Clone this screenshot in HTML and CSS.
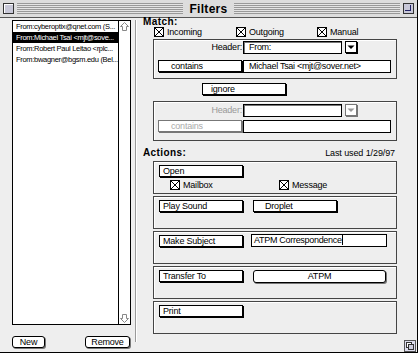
FILE: index.html
```html
<!DOCTYPE html>
<html lang="en">
<head>
  <meta charset="UTF-8">
  <title>Filters</title>
  <link rel="stylesheet" href="styles.css">
</head>
<body>
  <div class="window">
    <div class="titlebar">
      <span class="closebox"></span>
      <span class="stripes"></span>
      <span class="title">Filters</span>
      <span class="stripes"></span>
      <span class="zoombox"><span></span></span>
    </div>

    <div class="content">
      <div class="left">
        <div class="list">
          <ul class="rows">
            <li>From:cyberoptix@qnet.com (S...</li>
            <li class="sel">From:Michael Tsai &lt;mjt@sove...</li>
            <li>From:Robert Paul Leitao &lt;rplc...</li>
            <li>From:bwagner@bgsm.edu (Bel...</li>
          </ul>
          <div class="scroll">
            <span class="arrow up">
              <svg width="11" height="11" viewBox="0 0 11 11"><path d="M5.5 1.5L9.5 5.5H7.5V9.5H3.5V5.5H1.5Z" fill="#fff" stroke="#888"/></svg>
            </span>
            <span class="track"></span>
            <span class="arrow down">
              <svg width="11" height="11" viewBox="0 0 11 11"><path d="M5.5 9.5L9.5 5.5H7.5V1.5H3.5V5.5H1.5Z" fill="#fff" stroke="#888"/></svg>
            </span>
          </div>
        </div>
        <div class="listbtns">
          <button class="rbtn new">New</button>
          <button class="rbtn remove">Remove</button>
        </div>
      </div>

      <div class="sep"></div>

      <div class="right">
        <div class="heading">Match:</div>
        <div class="checks">
          <span class="check w82"><svg width="10" height="10" viewBox="0 0 10 10"><rect x="0.5" y="0.5" width="9" height="9" fill="#fff" stroke="#000"/><path d="M1 1L9 9M9 1L1 9" stroke="#000"/></svg>Incoming</span>
          <span class="check w81"><svg width="10" height="10" viewBox="0 0 10 10"><rect x="0.5" y="0.5" width="9" height="9" fill="#fff" stroke="#000"/><path d="M1 1L9 9M9 1L1 9" stroke="#000"/></svg>Outgoing</span>
          <span class="check"><svg width="10" height="10" viewBox="0 0 10 10"><rect x="0.5" y="0.5" width="9" height="9" fill="#fff" stroke="#000"/><path d="M1 1L9 9M9 1L1 9" stroke="#000"/></svg>Manual</span>
        </div>

        <div class="group g1">
          <div class="row">
            <span class="hdr">Header:</span>
            <span class="field from">From:</span>
            <span class="popup"><svg width="10" height="10" viewBox="0 0 10 10"><path d="M1.5 3.5H8.5L5 7Z" fill="#000"/></svg></span>
          </div>
          <div class="row r2">
            <span class="pbtn contains">contains</span>
            <span class="field wide">Michael Tsai &lt;mjt@sover.net&gt;</span>
          </div>
        </div>

        <div class="ignore-row"><span class="pbtn ignore">ignore</span></div>

        <div class="group g2 dim">
          <div class="row">
            <span class="hdr">Header:</span>
            <span class="field from"></span>
            <span class="popup"><svg width="10" height="10" viewBox="0 0 10 10"><path d="M1.5 3.5H8.5L5 7Z" fill="#999"/></svg></span>
          </div>
          <div class="row r2">
            <span class="pbtn contains">contains</span>
            <span class="field wide"></span>
          </div>
        </div>

        <div class="heading actions-head">
          <span>Actions:</span>
          <span class="lastused">Last used 1/29/97</span>
        </div>

        <div class="action">
          <span class="pbtn act">Open</span>
          <div class="subchecks">
            <span class="check w109"><svg width="10" height="10" viewBox="0 0 10 10"><rect x="0.5" y="0.5" width="9" height="9" fill="#fff" stroke="#000"/><path d="M1 1L9 9M9 1L1 9" stroke="#000"/></svg>Mailbox</span>
            <span class="check"><svg width="10" height="10" viewBox="0 0 10 10"><rect x="0.5" y="0.5" width="9" height="9" fill="#fff" stroke="#000"/><path d="M1 1L9 9M9 1L1 9" stroke="#000"/></svg>Message</span>
          </div>
        </div>

        <div class="action">
          <div class="arow">
            <span class="pbtn act">Play Sound</span>
            <span class="pbtn droplet">Droplet</span>
          </div>
        </div>

        <div class="action">
          <div class="arow">
            <span class="pbtn act">Make Subject</span>
            <span class="field subject">ATPM Correspondence<i class="caret"></i></span>
          </div>
        </div>

        <div class="action">
          <div class="arow">
            <span class="pbtn act">Transfer To</span>
            <span class="rbtn mailbox">ATPM</span>
          </div>
        </div>

        <div class="action">
          <span class="pbtn act">Print</span>
        </div>
      </div>
    </div>

    <span class="growbox">
      <svg width="12" height="12" viewBox="0 0 12 12"><rect x="0.5" y="0.5" width="11" height="11" fill="#dde" stroke="#555"/><rect x="2.5" y="2.5" width="5" height="5" fill="#fff" stroke="#333"/><rect x="4.5" y="4.5" width="5" height="5" fill="#ccd" stroke="#333"/></svg>
    </span>
  </div>
</body>
</html>
```

FILE: styles.css
```css
body { margin: 0; background: #fff; font-family: "Liberation Sans", Arial, sans-serif; font-size: 9px; color: #000; }
.window { position: relative; width: 417px; height: 352px; background: #eee; border-right: 1px solid #000; border-bottom: 1px solid #000; }

/* title bar */
.titlebar { display: flex; align-items: center; height: 17px; background: #ddd; border-bottom: 1px solid #555; }
.closebox { width: 9px; height: 9px; margin-left: 3px; border: 1px solid #333; background: #c8c8d8; box-shadow: inset 1px 1px 0 #fff; }
.stripes { flex: 1; height: 11px; margin: 0 3px; background: repeating-linear-gradient(#999 0 1px, #e4e4e4 1px 2px); }
.title { font-size: 12px; font-weight: bold; letter-spacing: 0.3px; padding: 0 3px; }
.zoombox { width: 9px; height: 9px; margin-right: 3px; border: 1px solid #333; background: #c8c8d8; position: relative; }
.zoombox span { position: absolute; left: 1px; top: 1px; width: 5px; height: 5px; border-right: 1px solid #226; border-bottom: 1px solid #226; }

.content { display: flex; height: 334px; }

/* left list */
.left { width: 119px; padding: 2px 0 0 12px; }
.list { display: flex; height: 303px; border: 1px solid #000; background: #fff; }
.rows { flex: 1; min-width: 0; margin: 0; padding: 0; list-style: none; }
.rows li { height: 11px; line-height: 11px; padding-left: 3px; font-size: 7.5px; letter-spacing: -0.3px; white-space: nowrap; }
.rows li.sel { background: #000; color: #fff; }
.scroll { display: flex; flex-direction: column; width: 11px; border-left: 1px solid #000; }
.arrow { height: 11px; display: block; }
.arrow svg { display: block; }
.track { flex: 1; }
.listbtns { display: flex; justify-content: space-between; margin-top: 11px; padding-right: 1px; }
.rbtn { height: 12px; padding: 0; border: 1px solid #000; border-radius: 3px; background: #fff; box-shadow: 1px 1px 0 #777; font: 9px "Liberation Sans", Arial, sans-serif; letter-spacing: -0.2px; line-height: 10px; text-align: center; }
.rbtn.new { width: 33px; }
.rbtn.remove { width: 45px; }

.sep { width: 0; height: 322px; margin: 2px 0 0 4px; border-left: 1px solid #999; border-right: 1px solid #fff; }

/* right side */
.right { width: 254px; padding-left: 6px; }
.heading { height: 10px; line-height: 10px; margin-top: -1px; font-size: 10px; font-weight: bold; letter-spacing: 0.4px; }
.checks { display: flex; height: 10px; margin-left: 11px; }
.check { display: flex; align-items: center; height: 10px; line-height: 10px; letter-spacing: -0.2px; }
.check svg { margin-right: 3px; flex: none; }
.w82 { width: 82px; }
.w81 { width: 81px; }
.w109 { width: 109px; }

.group { box-sizing: border-box; width: 244px; height: 40px; margin-left: 10px; border: 1px solid #444; box-shadow: inset 1px 1px 0 #fff; padding: 1px 0 0 4px; }
.g1 { margin-top: 2px; }
.g2 { margin-top: 6px; padding-top: 2px; }
.row { display: flex; align-items: flex-start; }
.g1 .r2 { margin-top: 6px; }
.g2 .r2 { margin-top: 3px; }
.hdr { width: 84px; padding-right: 1px; height: 13px; line-height: 13px; text-align: right; letter-spacing: -0.2px; }
.dim .hdr { color: #999; }

.field { box-sizing: border-box; display: block; height: 13px; line-height: 11px; border: 1px solid #000; background: #fff; padding-left: 5px; letter-spacing: -0.3px; white-space: nowrap; }
.field.from { width: 99px; box-shadow: inset 1px 1px 0 #777; }
.field.wide { width: 148px; margin-left: 1px; }
.popup { box-sizing: border-box; width: 12px; height: 12px; margin-left: 3px; border: 1px solid #000; background: #fff; box-shadow: 1px 1px 0 #000; }
.popup svg { display: block; margin: 0 auto; }
.dim .popup { border-color: #777; box-shadow: 1px 1px 0 #777; }

.pbtn { box-sizing: border-box; display: block; width: 84px; height: 12px; line-height: 10px; border: 1px solid #000; background: #fff; box-shadow: 1px 1px 0 #000; padding-left: 3px; letter-spacing: -0.2px; white-space: nowrap; }
.pbtn.contains { padding-left: 12px; }
.dim .pbtn { color: #aaa; border-color: #777; box-shadow: 1px 1px 0 #777; }
.ignore-row { margin: 4px 0 0 59px; }
.pbtn.ignore { padding-left: 8px; }

.actions-head { display: flex; justify-content: space-between; margin-top: 7px; padding-right: 2px; }
.lastused { font-weight: normal; font-size: 9px; letter-spacing: -0.1px; }

.action { box-sizing: border-box; width: 244px; height: 33px; margin: 2px 0 0 10px; border: 1px solid #444; box-shadow: inset 1px 1px 0 #fff; padding: 3px 0 0 5px; }
.actions-head + .action { margin-top: 3px; }
.arow { display: flex; align-items: flex-start; }
.subchecks { display: flex; margin: 3px 0 0 11px; }
.pbtn.droplet { margin-left: 10px; padding-left: 11px; }
.field.subject { width: 136px; margin: -1px 0 0 8px; padding-left: 2px; line-height: 11px; }
.caret { display: inline-block; width: 1px; height: 10px; background: #000; vertical-align: top; }
.rbtn.mailbox { box-sizing: border-box; display: block; width: 133px; height: 13px; margin-left: 10px; line-height: 11px; }

.growbox { position: absolute; right: 1px; bottom: 0; width: 12px; height: 12px; }
.growbox svg { display: block; }
```
